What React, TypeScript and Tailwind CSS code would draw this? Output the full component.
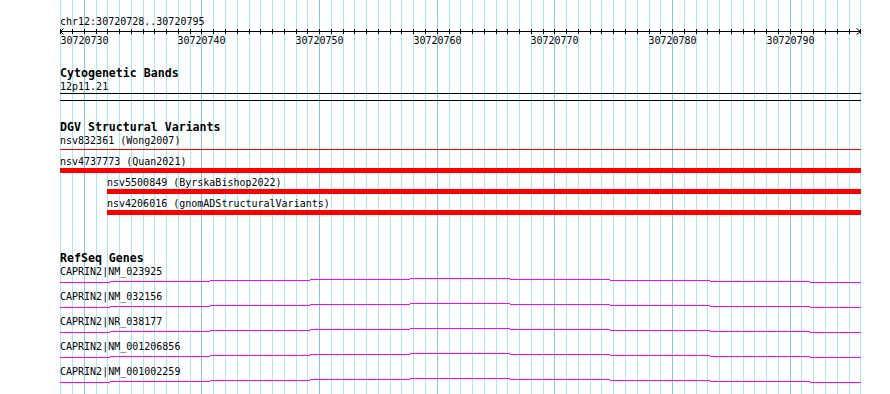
const START = 30720728
const BASES = 68
const LEFT = 60.3
const SCALE = 800 / BASES
const RIGHT = 861

const px = (k: number) => Math.round(LEFT + k * SCALE)
const ticks = Array.from({ length: BASES + 1 }, (_, k) => k)

const variants = [
  { label: 'nsv832361 (Wong2007)', start: 0, thin: true },
  { label: 'nsv4737773 (Quan2021)', start: 0, thin: false },
  { label: 'nsv5500849 (ByrskaBishop2022)', start: 4, thin: false },
  { label: 'nsv4206016 (gnomADStructuralVariants)', start: 4, thin: false },
]

const genes = ['CAPRIN2|NM_023925', 'CAPRIN2|NM_032156', 'CAPRIN2|NR_038177', 'CAPRIN2|NM_001206856', 'CAPRIN2|NM_001002259']

// step profile of the gene glyph (x breakpoints, rise in px)
const steps = [60, 110, 210, 310, 410, 510, 610, 710, 810, RIGHT]
const rise = [0, 1, 2, 3, 4, 3, 2, 1, 0]

function Grid() {
  return (
    <svg className="absolute inset-0" width={890} height={394} shapeRendering="crispEdges">
      {ticks.map((k) => (
        <rect key={k} x={px(k)} y={0} width={1} height={394} fill={(START + k) % 10 === 0 ? '#86c6ee' : '#a8eaf0'} />
      ))}
    </svg>
  )
}

function Ruler() {
  return (
    <svg className="block" width={890} height={18} shapeRendering="crispEdges">
      <rect x={60} y={3} width={RIGHT - 60} height={1} fill="#000" />
      {ticks.map((k) => (
        <rect key={k} x={px(k)} y={1} width={1} height={5} fill="#000" />
      ))}
      <path d="M60.5 3.5 L63.5 0.5 M60.5 3.5 L63.5 6.5 M860.5 3.5 L856.5 0.5 M860.5 3.5 L856.5 6.5" stroke="#000" fill="none" shapeRendering="auto" />
      {ticks
        .filter((k) => (START + k) % 10 === 0)
        .map((k) => (
          <text key={k} x={px(k) + 0.5} y={16} textAnchor="middle" fontSize={10} fontFamily="'DejaVu Sans Mono', monospace" fill="#000">
            {START + k}
          </text>
        ))}
    </svg>
  )
}

function TrackTitle({ children, className }: { children: React.ReactNode; className?: string }) {
  return <div className={`pl-[60px] h-[13px] leading-[13px] text-[11.6px] font-bold text-black ${className ?? ''}`}>{children}</div>
}

function Label({ children, x = 60 }: { children: React.ReactNode; x?: number }) {
  return (
    <div className="h-[13px] leading-[13px] text-[10px] text-black whitespace-nowrap" style={{ paddingLeft: x }}>
      {children}
    </div>
  )
}

export default function App() {
  return (
    <div className="relative w-[890px] h-[394px] bg-white overflow-hidden font-['DejaVu_Sans_Mono','Liberation_Mono',monospace]">
      <Grid />
      <div className="relative flex flex-col pt-[15px]">
        <Label>chr12:30720728..30720795</Label>
        <Ruler />

        <TrackTitle className="mt-[21px]">Cytogenetic Bands</TrackTitle>
        <Label>12p11.21</Label>
        <svg className="block" width={890} height={8} shapeRendering="crispEdges">
          <rect x={60} y={0} width={RIGHT - 60} height={1} fill="#000" />
          <rect x={60} y={7} width={RIGHT - 60} height={1} fill="#000" />
        </svg>

        <TrackTitle className="mt-[20px]">DGV Structural Variants</TrackTitle>
        {variants.map((v) => (
          <div key={v.label} className="flex flex-col">
            <Label x={px(v.start)}>{v.label}</Label>
            <svg className="block" width={890} height={8} shapeRendering="crispEdges">
              {v.thin ? (
                <rect x={60} y={2} width={RIGHT - 60} height={1} fill="#ff0000" />
              ) : (
                <rect x={px(v.start)} y={0} width={RIGHT - px(v.start)} height={5} fill="#ff0000" />
              )}
            </svg>
          </div>
        ))}

        <TrackTitle className="mt-[34px]">RefSeq Genes</TrackTitle>
        {genes.map((g) => (
          <div key={g} className="flex flex-col">
            <Label>{g}</Label>
            <svg className="block" width={890} height={12} shapeRendering="crispEdges">
              {rise.map((r, i) => (
                <rect key={i} x={steps[i]} y={4 - r} width={steps[i + 1] - steps[i]} height={1} fill="#ff00ff" />
              ))}
            </svg>
          </div>
        ))}
      </div>
    </div>
  )
}
